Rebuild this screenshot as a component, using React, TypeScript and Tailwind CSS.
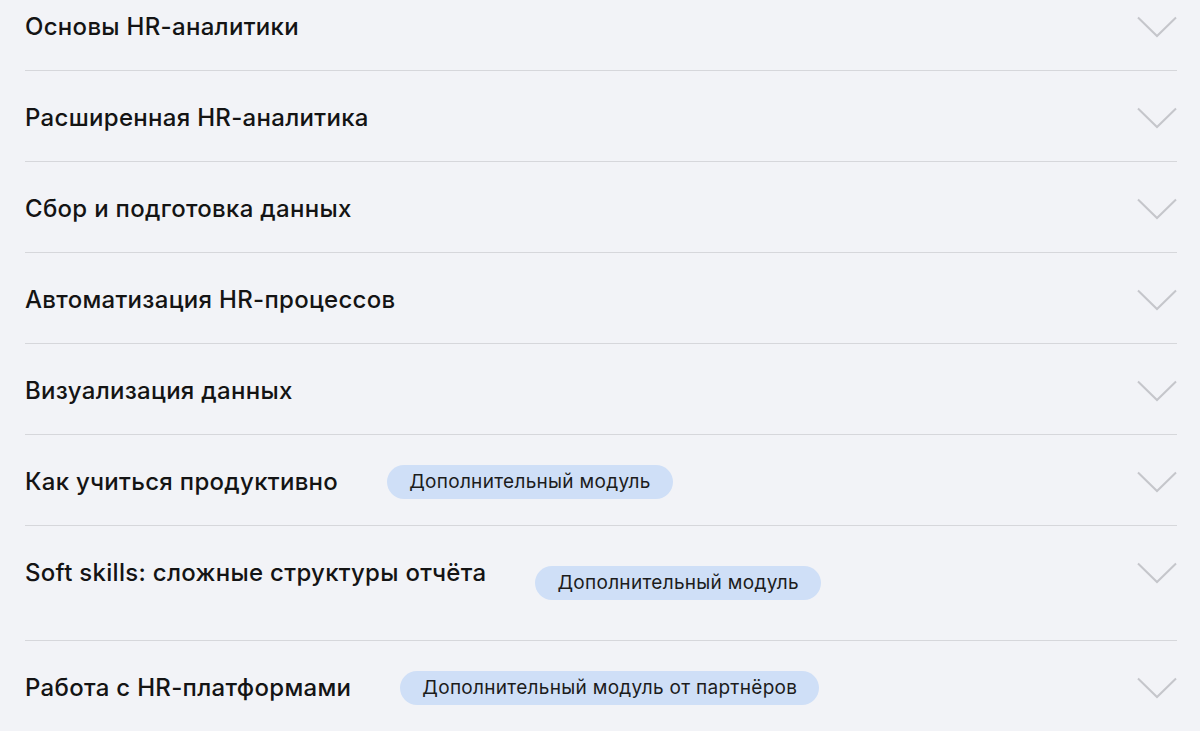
const items: { title: string; badge?: string; shifted?: boolean }[] = [
  { title: 'Основы HR-аналитики' },
  { title: 'Расширенная HR-аналитика' },
  { title: 'Сбор и подготовка данных' },
  { title: 'Автоматизация HR-процессов' },
  { title: 'Визуализация данных' },
  { title: 'Как учиться продуктивно', badge: 'Дополнительный модуль' },
  { title: 'Soft skills: сложные структуры отчёта', badge: 'Дополнительный модуль', shifted: true },
  { title: 'Работа с HR-платформами', badge: 'Дополнительный модуль от партнёров' },
];

const Chevron = () => (
  <svg width="40" height="22" viewBox="0 0 40 22" fill="none" className="shrink-0">
    <path d="M1 1.5L20 20L39 1.5" stroke="#c5c6cb" strokeWidth="2" />
  </svg>
);

export default function App() {
  return (
    <div className="w-full min-h-screen bg-[#f2f3f7] px-[25px] font-['Inter',sans-serif] text-[#141414]">
      <div className="w-[1152px]">
        {items.map((item, i) => (
          <div
            key={item.title}
            className={`flex justify-between border-b border-[#d6d7db] last:border-b-0 ${
              i === 0 ? 'pt-[10px]' : 'pt-[30px]'
            } ${item.shifted ? 'items-start pb-[40px]' : 'items-center pb-[26px]'}`}
          >
            <div className={`flex gap-[49px] ${item.shifted ? 'items-start' : 'items-center h-[34px]'}`}>
              <span className="text-[24px] font-medium leading-[34px] tracking-[0.3px]">{item.title}</span>
              {item.badge && (
                <span
                  className={`h-[34px] px-[22px] flex items-center rounded-full bg-[#cfdff7] text-[19px] tracking-[0.3px] text-[#1c1c1c] ${
                    item.shifted ? 'mt-[10px]' : ''
                  }`}
                >
                  {item.badge}
                </span>
              )}
            </div>
            <div className={item.shifted ? 'mt-[6px]' : ''}>
              <Chevron />
            </div>
          </div>
        ))}
      </div>
    </div>
  );
}
